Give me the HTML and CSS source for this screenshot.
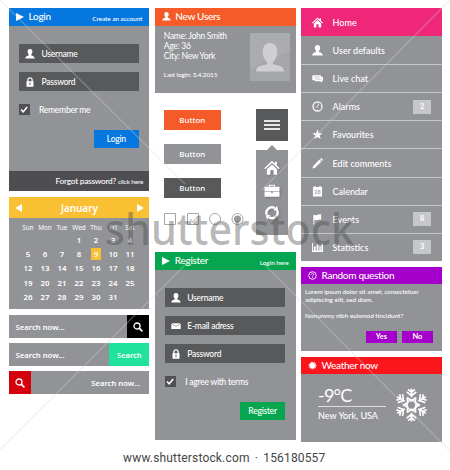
FILE: index.html
```html
<!DOCTYPE html>
<html lang="en">
<head>
<meta charset="utf-8">
<title>UI kit</title>
<link rel="stylesheet" href="styles.css">
</head>
<body>
<svg class="defs" aria-hidden="true">
  <symbol id="user" viewBox="0 0 10 10"><path d="M5 0C3.300 0 2.500 1.200 2.600 2.800 2.700 4.300 3.200 5 3.700 5.600V6.400C2.400 6.900.5 7 .2 9.500H9.800C9.500 7 7.600 6.900 6.300 6.400V5.600C6.800 5 7.300 4.300 7.400 2.800 7.500 1.200 6.700 0 5 0Z"/></symbol>
  <symbol id="lock" viewBox="0 0 10 10"><path fill-rule="evenodd" d="M1.500 4.200H2.200V3C2.200-.8 7.800-.8 7.800 3V4.200H8.500V9.800H1.500ZM3.500 4.200H6.500V3C6.500 1 3.500 1 3.500 3ZM4.500 5.500V8H5.500V5.500Z"/></symbol>
  <symbol id="mail" viewBox="0 0 10 10"><path d="M.3 2.200H9.700L5 5.200ZM.3 2.700 5 5.800 9.700 2.700V8H.3Z"/></symbol>
  <symbol id="check" viewBox="0 0 10 10"><path d="M2 5 4.200 7.300 8.200 2.500" fill="none" stroke="currentColor" stroke-width="1.500"/></symbol>
  <symbol id="search" viewBox="0 0 10 10"><g fill="none" stroke="currentColor"><circle cx="4" cy="4" r="3" stroke-width="1.300"/><path d="M6.200 6.200 9.400 9.400" stroke-width="1.700"/></g></symbol>
  <symbol id="home" viewBox="0 0 12 12"><path d="M6 .5 8.300 2.700V1.400H9.800V4.200L12 6.400 11.200 7.200 6 2.300.8 7.200 0 6.400ZM6 3.400 10 7.100V11.500H7.200V8H4.800V11.500H2V7.100Z"/></symbol>
  <symbol id="chat" viewBox="0 0 12 12"><path d="M1.500 2.500H9Q10 2.500 10 3.500V4H11Q12 4 12 5V8Q12 9 11 9V10.500L9 9H4Q3 9 3 8H1.500Q.3 8 .3 7V3.500Q.3 2.500 1.500 2.500Z"/><path d="M2 4.200H8.500M2 5.500H8.500M4 7H10" stroke="#aaabaf" stroke-width=".5"/></symbol>
  <symbol id="clock" viewBox="0 0 12 12"><g fill="none" stroke="currentColor"><circle cx="6" cy="6" r="5" stroke-width="1.200"/><path d="M5.200 7.500 7.500 3M6 1.500V2.500M6 9.500V10.500M1.500 6H2.500M9.500 6H10.500" stroke-width=".9"/></g></symbol>
  <symbol id="star" viewBox="0 0 12 12"><path d="M6 .5 7.400 4.500H11.600L8.200 7 9.500 11 6 8.600 2.500 11 3.800 7 .4 4.500H4.600Z"/></symbol>
  <symbol id="pencil" viewBox="0 0 12 12"><path d="M.5 11.500 1.300 8.600 8.200 1.700 10.300 3.800 3.400 10.700ZM8.800 1.100 9.500.4Q10 0 10.600.5L11.500 1.400Q12 2 11.600 2.500L10.900 3.200Z"/></symbol>
  <symbol id="flag" viewBox="0 0 12 12"><path d="M1.500 1H2.500C5 2.500 7-.8 10 .6V6.300C7 5 5 8 2.500 6.500V11.500H1.500Z"/></symbol>
  <symbol id="stats" viewBox="0 0 12 12"><path d="M0 1H1V9.500H2V5H4V9.500H5V3H7V9.500H8V4.500H9.500V9.500H10.200V1.500H12V11H0Z"/></symbol>
  <symbol id="help" viewBox="0 0 10 10"><g fill="none" stroke="currentColor"><circle cx="5" cy="5" r="4.200" stroke-width="1"/><path d="M3.500 4C3.500 2.200 6.500 2.300 6.400 4 6.300 5 5 5 5 6.200M5 6.900V7.800" stroke-width=".9"/></g></symbol>
  <symbol id="sun" viewBox="0 0 10 10"><circle cx="5" cy="5" r="3"/><circle cx="5" cy="5" r="3.500" fill="none" stroke="currentColor" stroke-width="1.500" stroke-dasharray="1 .6"/></symbol>
  <symbol id="case" viewBox="0 0 16 14"><path fill-rule="evenodd" d="M5 3V1H11V3H15.500V7.500H.5V3ZM6.200 3H9.800V2H6.200ZM.5 8H7V9H9V8H15.500V13H.5Z"/></symbol>
  <symbol id="sync" viewBox="0 0 16 16"><g fill="none" stroke="currentColor" stroke-width="2.500"><path d="M2.500 10A5.800 5.800 0 0 1 11 3.200M13.500 6A5.800 5.800 0 0 1 5 12.800"/></g><path d="M9.500 5.800 14.500 6.200 13.200.7ZM6.500 10.200 1.500 9.800 2.800 15.300Z"/></symbol>
  <symbol id="arm" viewBox="-18 -18 36 36"><path d="M0-8V-17M-3.500-16 0-13 3.500-16M-5-13.500 0-9.500 5-13.500M-2.300-4 0-5.300 2.300-4M-4.500-7.500 0-4.500 4.500-7.500" fill="none" stroke="currentColor" stroke-width="1.700"/></symbol>
</svg>

<main class="kit">
  <div class="column">
    <section class="panel login">
      <header class="bar blue"><i class="play"></i><h2>Login</h2><a>Create an account</a></header>
      <div class="form">
        <div class="field"><svg><use href="#user"/></svg><span>Username</span></div>
        <div class="field"><svg><use href="#lock"/></svg><span>Password</span></div>
        <div class="agree"><b class="box"><svg><use href="#check"/></svg></b><span>Remember me</span></div>
        <div class="submit blue"><span>Login</span></div>
      </div>
      <footer class="forgot"><span>Forgot password?</span><small>click here</small></footer>
    </section>

    <section class="panel calendar">
      <header class="month"><i class="play back"></i><span>January</span><i class="play"></i></header>
      <div class="days">
        <small>Sun</small><small>Mon</small><small>Tue</small><small>Wed</small><small>Thu</small><small>Fri</small><small>Sat</small>
        <b></b><b></b><b></b><b>1</b><b>2</b><b>3</b><b>4</b>
        <b>5</b><b>6</b><b>7</b><b>8</b><b class="today">9</b><b>10</b><b>11</b>
        <b>12</b><b>13</b><b>14</b><b>15</b><b>16</b><b>17</b><b>18</b>
        <b>19</b><b>20</b><b>21</b><b>22</b><b>23</b><b>24</b><b>25</b>
        <b>26</b><b>27</b><b>28</b><b>29</b><b>30</b><b>31</b>
      </div>
    </section>

    <div class="panel find"><span>Search now...</span><b class="black"><svg><use href="#search"/></svg></b></div>
    <div class="panel find"><span>Search now...</span><b class="mint">Search</b></div>
    <div class="panel find"><b class="crimson"><svg><use href="#search"/></svg></b><span class="end">Search now...</span></div>
  </div>

  <div class="column">
    <section class="panel profile">
      <header class="bar orange"><svg><use href="#user"/></svg><h2>New Users</h2></header>
      <div class="about">
        <div><p>Name: John Smith</p><p>Age: 36</p><p>City: New York</p><small>Last login: 3.4.2015</small></div>
        <svg class="avatar" viewBox="0 0 40 48"><path d="M0 0H40V48H0Z" fill="#a5a6aa"/><path d="M0 0H40V18L0 36Z" fill="#abacb0"/><path d="M20 10C14 10 12 15 13 22 14 26 16 28 17 29V31C13 33 6 32 6 38.500H34C34 32 27 33 23 31V29C24 28 26 26 27 22 28 15 26 10 20 10Z" fill="#cfcfd1"/></svg>
      </div>
    </section>

    <section class="controls">
      <div class="buttons">
        <div class="btn orange">Button</div><div class="btn gray">Button</div><div class="btn dark">Button</div>
        <svg class="choices" viewBox="0 0 82 14"><g fill="none" stroke="#a8a8a8"><path d="M.5 1.500H11.500V12.500H.5ZM23.500 1.500H34.500V12.500H23.500ZM26 7 29 10 34 4"/><circle cx="51" cy="7" r="5.500"/><circle cx="73.500" cy="7" r="5.500"/></g><circle cx="73.500" cy="7" r="3.500" fill="#999"/></svg>
      </div>
      <div class="toggle">
        <div class="burger"><i></i><i></i><i></i></div>
        <div class="arrow"></div>
        <div class="popup"><svg><use href="#home"/></svg><svg><use href="#case"/></svg><svg><use href="#sync"/></svg></div>
      </div>
    </section>

    <section class="panel register">
      <header class="bar green"><i class="play"></i><h2>Register</h2><a>Login here</a></header>
      <div class="form">
        <div class="field"><svg><use href="#user"/></svg><span>Username</span></div>
        <div class="field"><svg><use href="#mail"/></svg><span>E-mail adress</span></div>
        <div class="field"><svg><use href="#lock"/></svg><span>Password</span></div>
        <div class="agree"><b class="box"><svg><use href="#check"/></svg></b><span>I agree with terms</span></div>
        <div class="submit green"><span>Register</span></div>
      </div>
    </section>
  </div>

  <div class="column">
    <nav class="panel menu">
      <div class="item pink"><svg><use href="#home"/></svg><span>Home</span></div>
      <div class="item"><svg><use href="#user"/></svg><span>User defaults</span></div>
      <div class="item"><svg><use href="#chat"/></svg><span>Live chat</span></div>
      <div class="item"><svg><use href="#clock"/></svg><span>Alarms</span><b>2</b></div>
      <div class="item"><svg><use href="#star"/></svg><span>Favourites</span></div>
      <div class="item"><svg><use href="#pencil"/></svg><span>Edit comments</span></div>
      <div class="item"><svg viewBox="0 0 12 12"><path d="M1 1H2.500V0H4V1H8V0H9.500V1H11V11.500H1Z"/><text x="6" y="8.500" class="cal-num">28</text></svg><span>Calendar</span></div>
      <div class="item"><svg><use href="#flag"/></svg><span>Events</span><b>8</b></div>
      <div class="item"><svg><use href="#stats"/></svg><span>Statistics</span><b>3</b></div>
    </nav>

    <section class="panel question">
      <header class="bar purple"><svg><use href="#help"/></svg><h2>Random question</h2></header>
      <p>Lorem ipsum dolor sit amet, <em>consectetuer</em><br>adipiscing elit, sed diam.<br><br>Nonummy nibh euismod tincidunt?</p>
      <div class="answers"><b class="purple yes">Yes</b><b class="purple">No</b></div>
    </section>

    <section class="panel weather">
      <header class="bar red"><svg><use href="#sun"/></svg><h2>Weather now</h2></header>
      <div class="forecast">
        <div class="reading"><strong>-9°C</strong><span>New York, USA</span></div>
        <svg class="flake" viewBox="-18 -18 36 36"><use href="#arm" x="-18" y="-18" width="36" height="36"/><use href="#arm" x="-18" y="-18" width="36" height="36" transform="rotate(60)"/><use href="#arm" x="-18" y="-18" width="36" height="36" transform="rotate(120)"/><use href="#arm" x="-18" y="-18" width="36" height="36" transform="rotate(180)"/><use href="#arm" x="-18" y="-18" width="36" height="36" transform="rotate(240)"/><use href="#arm" x="-18" y="-18" width="36" height="36" transform="rotate(300)"/></svg>
      </div>
    </section>
  </div>
</main>

<footer class="credit">www.shutterstock.com <span>·</span> 156180557</footer>

<svg class="watermark" viewBox="0 0 450 470">
  <path d="M0 0 185 184M0 450 187 263M450 0 262 190M263 263 450 451" fill="none" stroke="#d8d8d8" stroke-opacity=".3" stroke-width="1.500"/>
  <text x="105" y="245" textLength="249" lengthAdjust="spacingAndGlyphs">shutterstock</text>
</svg>
</body>
</html>
```
FILE: styles.css
```css
* { box-sizing: border-box; }
body { margin: 0; width: 450px; height: 470px; overflow: hidden; position: relative; background: #fff; color: #fff; font-family: Lato, "Liberation Sans", sans-serif; font-size: 9px; }
svg { display: block; fill: currentColor; flex: none; }
.defs { position: absolute; width: 0; height: 0; }
h2, p { margin: 0; font-weight: 400; }
span, small, h2, a, p { white-space: nowrap; }
.kit { display: flex; gap: 5.500px; padding: 8px 0 0 8.500px; height: 446px; }
.column { width: 140.800px; display: flex; flex-direction: column; }
.panel { background: #929397; flex: none; }
.blue { background: #0677df; }
.orange { background: #f45b28; }
.green { background: #06a650; }
.pink { background: #ee2779; }
.purple { background: #a500cb; }
.red { background: #fb151c; }
.gray { background: #929397; }
.dark { background: #58595b; }
.black { background: #000; }
.mint { background: #20e29c; }
.crimson { background: #d4000b; }

.bar { height: 17.500px; display: flex; align-items: center; padding: 0 7px; }
.bar h2 { font-size: 10px; line-height: 17px; font-weight: 500; letter-spacing: -.3px; }
.bar svg { width: 9px; height: 9px; margin-right: 4.500px; }
.bar a { margin-left: auto; font-size: 6.500px; padding-top: 3px; letter-spacing: -.1px; font-weight: 500; }
.play { border-left: 8px solid #fff; border-top: 4px solid transparent; border-bottom: 4px solid transparent; margin-right: 5px; }

.form { padding: 18.500px 10.500px 0; display: flex; flex-direction: column; }
.field { height: 19px; margin-bottom: 9px; background: #58595b; display: flex; align-items: center; padding-left: 6px; }
.field svg { width: 10px; height: 10px; margin-right: 6.500px; }
.field span, .agree span, .submit span { font-size: 8.500px; letter-spacing: -.25px; font-weight: 500; }
.agree { display: flex; align-items: center; gap: 9.500px; height: 11px; margin-top: 4px; }
.box { width: 10.500px; height: 11px; background: #505154; }
.box svg { width: 10px; height: 11px; }
.submit { align-self: flex-end; width: 45px; height: 18px; margin-top: 15px; display: flex; align-items: center; justify-content: center; }
.login { height: 183px; display: flex; flex-direction: column; }
.forgot { height: 20px; margin-top: auto; background: #4e4e52; display: flex; align-items: center; justify-content: flex-end; gap: 2px; padding-right: 6px; font-size: 8.300px; letter-spacing: -.25px; font-weight: 500; }
.forgot small { font-size: 6.300px; letter-spacing: -.1px; padding-top: 1px; }

.calendar { height: 112px; margin-top: 6px; font-family: "Noto Sans", sans-serif; }
.month { height: 21px; background: #f8c032; display: flex; align-items: center; justify-content: space-between; padding: 0 5px 0 6px; font-size: 9.900px; font-weight: 600; }
.month .play { margin: 0; border-left-width: 7.500px; }
.month .back { transform: scaleX(-1); }
.days { display: grid; grid-template-columns: repeat(7, 17px); grid-template-rows: 13px repeat(5, 14.300px); padding: 1.500px 0 0 11px; align-items: center; justify-items: center; }
.days b { font-size: 7.900px; line-height: 12px; font-weight: 600; }
.days small { font-size: 6.400px; padding-top: 3px; }
.days .today { background: #f8c032; width: 10px; text-align: center; }

.find { height: 23px; margin-top: 5px; display: flex; align-items: center; justify-content: space-between; font-size: 8px; }
.calendar + .find { margin-top: 6px; }
.find span { padding-left: 7px; font: 600 7.700px "Noto Sans", sans-serif; }
.find .end { padding-right: 9px; }
.find b { min-width: 22.500px; height: 23px; display: flex; align-items: center; justify-content: center; }
.find .mint { width: 40px; font: 600 7.500px "Noto Sans", sans-serif; }
.find svg { width: 10px; height: 10px; }

.profile { height: 85px; }
.about { display: flex; justify-content: space-between; padding: 5.500px 5.500px 0 9px; font-size: 8.500px; line-height: 10.200px; font-weight: 500; }
.about p { letter-spacing: -.28px; }
.about small { display: block; font-size: 6.300px; letter-spacing: -.05px; margin-top: 8px; }
.avatar { width: 40px; height: 48px; margin-top: 2px; }

.controls { height: 159px; display: flex; padding: 16px 7.500px 0 9px; justify-content: space-between; }
.btn { width: 57px; height: 20px; margin: 1px 0 14px; display: flex; align-items: center; justify-content: center; font: 500 7.900px "Noto Sans", sans-serif; }
.btn + .btn { margin-top: 0; }
.buttons { width: 82px; }
.choices { width: 82px; height: 14px; margin-top: 4px; }
.toggle { width: 32px; }
.burger { height: 32px; background: #58595b; display: flex; flex-direction: column; align-items: center; justify-content: center; gap: 2.300px; }
.burger i { width: 16px; height: 2px; background: #e6e6e6; }
.arrow { width: 0; margin: 4px auto 0; border: 5px solid transparent; border-top: 0; border-bottom-color: #929397; }
.popup { height: 85px; background: #929397; display: flex; flex-direction: column; align-items: center; gap: 7px; padding-top: 10px; }
.popup svg { width: 16px; height: 15.500px; filter: drop-shadow(1px 1px 1px #777); }

.register { height: 188px; }
.register .field { padding-left: 5.500px; }
.register .submit { height: 18px; }

.menu { height: 253px; }
.item { height: 28.100px; display: flex; align-items: center; padding: 0 11px; border-top: 1px solid #c5c6c8; font-size: 9px; font-weight: 500; }
.item.pink { border-top: 0; }
.item.pink + .item { border-top-color: #929397; }
.item svg { width: 11px; height: 11px; margin-right: 9.500px; }
.item b { width: 17.500px; height: 14px; margin-left: auto; background: #c6c7c9; text-align: center; font-size: 7.500px; line-height: 14px; }
.cal-num { fill: #929397; font-size: 6px; text-anchor: middle; }

.question { height: 84px; margin-top: 6px; }
.question p { padding: 3.500px 4px 0; font-size: 6.450px; line-height: 8.100px; letter-spacing: -.02px; font-weight: 500; }
.question .bar, .weather .bar { height: 17px; }
.answers { display: flex; justify-content: flex-end; gap: 5px; padding: 11.500px 9px 0 0; }
.answers b { width: 31px; height: 12px; line-height: 12px; text-align: center; font-size: 7.500px; }

.weather { height: 84.500px; margin-top: 6px; }
.forecast { display: flex; justify-content: space-between; padding: 13px 13px 0 17px; }
.reading { width: 68px; }
.reading strong { display: block; height: 20px; line-height: 17px; font-size: 18px; font-weight: 400; letter-spacing: -.8px; border-bottom: 1px solid #ddd; }
.reading span { font-size: 9px; line-height: 17px; font-weight: 500; }
.flake { width: 35px; height: 36px; }

.credit { margin-left: 123px; height: 16px; margin-top: 4px; white-space: nowrap; line-height: 16px; font-family: Roboto, sans-serif; font-size: 12px; letter-spacing: .17px; color: #444; }
.credit span { margin: 0 2px; }
.watermark { position: absolute; inset: 0; width: 450px; height: 470px; pointer-events: none; }
.watermark text { font: 500 43px "Noto Sans", sans-serif; fill: #444; fill-opacity: .38; }
```
